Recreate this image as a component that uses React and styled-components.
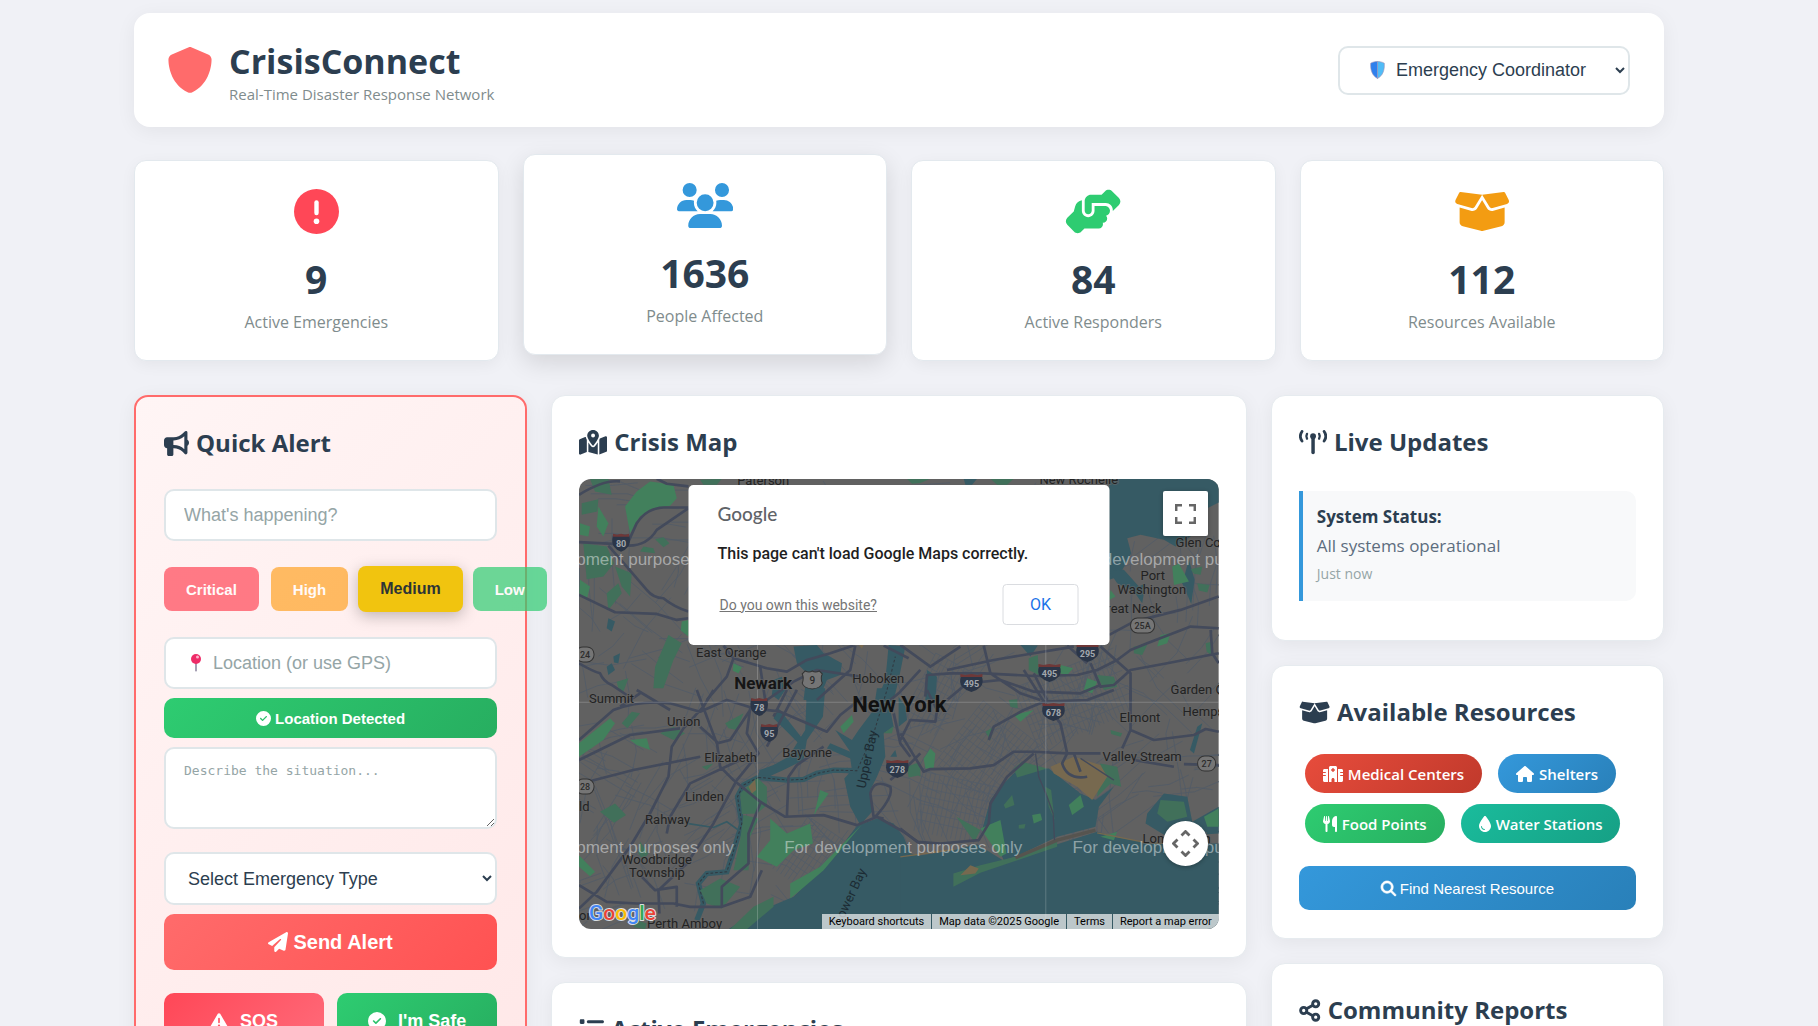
import React from "react";
import styled, { createGlobalStyle } from "styled-components";
import {
  FaShield,
  FaUsers,
  FaHandshakeAngle,
  FaBoxOpen,
  FaBullhorn,
  FaMapLocationDot,
  FaCircleCheck,
  FaPaperPlane,
  FaTriangleExclamation,
  FaHospital,
  FaHouse,
  FaUtensils,
  FaDroplet,
  FaMagnifyingGlass,
  FaList,
} from "react-icons/fa6";

const GlobalStyle = createGlobalStyle`
  *, *::before, *::after { box-sizing: border-box; }
  html { background: #f0f1f6; }
  body {
    margin: 0;
    height: 100vh;
    overflow: hidden;
    font-family: "Open Sans", "Noto Sans", sans-serif;
    color: #2c3e50;
  }
  h1, h2, p { margin: 0; }
  button, input, select { font-family: "Liberation Sans", Arial, sans-serif; }
  svg { flex: none; }
`;

const GlyphBox = styled.span`
  display: inline-flex;
  flex: none;
  width: ${(p) => p.$wide / 512}em;
  height: 1em;
  & > svg {
    width: 100%;
    height: 100%;
    ${(p) => (p.$heavy ? "stroke: currentColor; stroke-width: 24px; overflow: visible;" : "")}
  }
`;

// Icons are drawn one em high; `wide` is the width of the icon's 512-high view box.
const Glyph = ({ icon: Icon, wide = 512, heavy }) => (
  <GlyphBox $wide={wide} $heavy={heavy}>
    <Icon aria-hidden="true" />
  </GlyphBox>
);

const Page = styled.div`
  padding: 13px 154px 24px 134px;
`;

const Header = styled.header`
  display: flex;
  align-items: center;
  justify-content: space-between;
  padding: 23px 34px 23px 33px;
  border-radius: 16px;
  background: #fff;
  box-shadow: 0 4px 20px rgba(0, 0, 0, 0.06);
`;

const Brand = styled.div`
  display: flex;
  align-items: center;
  gap: 16px;
  & > ${GlyphBox} { font-size: 46px; color: #ff6b6b; }
`;

const BrandText = styled.div`
  padding-top: 2px;
`;

const BrandName = styled.h1`
  font-size: 34px;
  line-height: 46px;
  font-weight: 700;
`;

const Tagline = styled.p`
  font-size: 15px;
  line-height: 20px;
  color: #7f8c8d;
`;

const FieldBox = styled.div`
  position: relative;
  width: ${(p) => p.$width || "100%"};
  & > svg {
    position: absolute;
    left: ${(p) => p.$iconLeft || 26}px;
    top: 50%;
    transform: translateY(-50%);
    pointer-events: none;
  }
`;

const Select = styled.select`
  display: block;
  width: 100%;
  height: ${(p) => p.$height}px;
  padding: 0 ${(p) => (p.$iconSpace ? 0 : 18)}px 0 ${(p) => (p.$iconSpace ? 52 : 18)}px;
  border: 2px solid #dfe6e9;
  border-radius: 10px;
  background: #fff;
  color: #2c3e50;
  font-size: 18px;
`;

const Stats = styled.section`
  display: grid;
  grid-template-columns: repeat(4, 1fr);
  gap: 24px;
  margin: 33px 0 34px;
`;

const StatCard = styled.article`
  display: flex;
  flex-direction: column;
  align-items: center;
  padding: 28px;
  border: 1px solid #e3e9ee;
  border-radius: 12px;
  background: #fff;
  box-shadow: ${(p) => (p.$raised ? "0 8px 25px rgba(0, 0, 0, 0.12)" : "0 4px 15px rgba(0, 0, 0, 0.05)")};
  transform: ${(p) => (p.$raised ? "translateY(-6px)" : "none")};
  & > ${GlyphBox} { font-size: 45px; color: ${(p) => p.$color}; }
`;

const StatNumber = styled.div`
  margin: 20px 0 8px;
  font-size: 39px;
  line-height: 50px;
  font-weight: 700;
`;

const StatLabel = styled.div`
  font-size: 16px;
  line-height: 20px;
  color: #7f8c8d;
`;

const Dashboard = styled.main`
  display: grid;
  grid-template-columns: minmax(0, 13fr) minmax(0, 23fr) minmax(0, 13fr);
  gap: 24px;
  align-items: start;
`;

const Column = styled.div`
  display: flex;
  flex-direction: column;
  gap: 24px;
  min-width: 0;
`;

const Card = styled.section`
  padding: 27px 27px 28px;
  border: 1px solid #e6ebef;
  border-radius: 14px;
  background: #fff;
  box-shadow: 0 4px 20px rgba(0, 0, 0, 0.06);
`;

const AlertCard = styled(Card)`
  position: relative;
  padding: 27px 28px 28px;
  border: 2px solid #ff6b6b;
  background: linear-gradient(135deg, #fff5f5, #ffe8e8);
`;

const CardTitle = styled.h2`
  display: flex;
  align-items: center;
  gap: 7px;
  margin-bottom: ${(p) => p.$space}px;
  font-size: 24px;
  line-height: 38px;
  font-weight: 700;
  white-space: nowrap;
  & > ${GlyphBox} { font-size: 25px; }
`;

const TextInput = styled.input`
  display: block;
  width: 100%;
  height: 52px;
  padding: 0 18px 0 ${(p) => (p.$iconSpace ? 47 : 18)}px;
  border: 2px solid #dfe6e9;
  border-radius: 10px;
  background: #fff;
  font-size: 18px;
  &::placeholder { color: #95a5a6; opacity: 1; }
`;

const Levels = styled.div`
  display: flex;
  gap: 12px;
  margin: 26px 0;
`;

const levelColors = {
  critical: "#ff4757",
  high: "#ffa326",
  medium: "#f1c40f",
  low: "#2ecc71",
};

const LevelButton = styled.button`
  flex: none;
  height: ${(p) => (p.$active ? 46 : 44)}px;
  margin: ${(p) => (p.$active ? "-1px -2px" : "0")};
  padding: 0 22px;
  border: 0;
  border-radius: 8px;
  background: ${(p) => levelColors[p.$level]};
  color: ${(p) => (p.$active ? "#2d3436" : "#fff")};
  font-size: ${(p) => (p.$active ? 16 : 15)}px;
  font-weight: 700;
  opacity: ${(p) => (p.$active ? 1 : 0.7)};
  box-shadow: ${(p) => (p.$active ? "0 4px 15px rgba(0, 0, 0, 0.25)" : "none")};
`;

const gradients = {
  green: "linear-gradient(135deg, #2ecc71, #27ae60)",
  coral: "linear-gradient(135deg, #ff6b6b, #ff5252)",
  red: "linear-gradient(135deg, #ff4757, #ff6b7a)",
  blue: "linear-gradient(135deg, #3498db, #2980b9)",
  brick: "linear-gradient(135deg, #e74c3c, #c0392b)",
  teal: "linear-gradient(135deg, #1abc9c, #16a085)",
};

const ActionButton = styled.button`
  display: flex;
  align-items: center;
  justify-content: center;
  gap: ${(p) => p.$gap || 4}px;
  width: 100%;
  height: ${(p) => p.$height}px;
  padding: 0;
  border: 0;
  border-radius: 10px;
  background: ${(p) => gradients[p.$tone]};
  color: #fff;
  font-size: ${(p) => p.$size}px;
  font-weight: ${(p) => p.$weight || 700};
`;

const Stack = styled.div`
  display: flex;
  flex-direction: column;
  gap: 9px;
`;

const TextArea = styled.textarea`
  display: block;
  width: 100%;
  height: 82px;
  margin-bottom: 14px;
  padding: 13px 18px;
  border: 2px solid #dfe6e9;
  border-radius: 10px;
  background: #fff;
  font-family: "DejaVu Sans Mono", monospace;
  font-size: 13px;
  line-height: 18px;
  resize: vertical;
  &::placeholder { color: #95a5a6; opacity: 1; }
`;

const PanicRow = styled.div`
  display: grid;
  grid-template-columns: 1fr 1fr;
  gap: 13px;
  margin-top: 23px;
`;

const MapFrame = styled.div`
  position: relative;
  height: 450px;
  border-radius: 12px;
  overflow: hidden;
  font-family: Roboto, sans-serif;
`;

const MapCanvas = styled.svg`
  display: block;
  width: 100%;
  height: 100%;
  text { font-family: Roboto, sans-serif; }
`;

const Watermark = styled.g`
  text { font-family: "Liberation Sans", Arial, sans-serif; }
`;

const MapDialog = styled.div`
  position: absolute;
  top: 6px;
  left: 50%;
  display: flex;
  flex-direction: column;
  width: 421px;
  height: 160px;
  padding: 18px 31px 20px 29px;
  border-radius: 5px;
  background: #fff;
  color: #1f1f1f;
  transform: translateX(-50%);
`;

const DialogLogo = styled.div`
  font-family: Lato, sans-serif;
  font-size: 19px;
  line-height: 22px;
  font-weight: 500;
  color: #5f6368;
`;

const DialogText = styled.p`
  margin-top: 19px;
  font-size: 16px;
  line-height: 20px;
  font-weight: 500;
`;

const DialogActions = styled.div`
  display: flex;
  align-items: center;
  justify-content: space-between;
  margin-top: 20px;
  padding-left: 2px;
  a { color: #757575; font-size: 14px; text-decoration: underline; }
`;

const DialogButton = styled.button`
  width: 76px;
  height: 41px;
  border: 1px solid #dadce0;
  border-radius: 4px;
  background: #fff;
  color: #1a73e8;
  font-family: Roboto, sans-serif;
  font-size: 16px;
`;

const MapControl = styled.button`
  position: absolute;
  right: 11px;
  ${(p) => (p.$round ? "bottom: 63px;" : "top: 12px;")}
  display: grid;
  place-items: center;
  width: 45px;
  height: 45px;
  padding: 0;
  border: 0;
  border-radius: ${(p) => (p.$round ? "50%" : "2px")};
  background: #fff;
  box-shadow: 0 1px 4px rgba(0, 0, 0, 0.3);
`;

const MapFooter = styled.div`
  position: absolute;
  right: 0;
  bottom: 0;
  display: flex;
  gap: 1px;
  font-size: 11px;
  line-height: 15px;
  & > * {
    padding: 0 7px;
    border: 0;
    background: rgba(245, 245, 245, 0.7);
    color: #000;
    font: inherit;
    text-decoration: none;
  }
`;

const Update = styled.article`
  display: flex;
  flex-direction: column;
  gap: 4px;
  margin-bottom: 11px;
  padding: 13px 14px 15px;
  border-left: 4px solid #3498db;
  border-radius: 0 10px 10px 0;
  background: #f8f9fa;
  font-size: 17px;
  line-height: 25px;
  strong { font-weight: 700; }
  p { color: #5d6d7e; }
  time { font-size: 14px; line-height: 24px; color: #95a5a6; }
`;

const Pills = styled.div`
  display: flex;
  flex-wrap: wrap;
  gap: 11px 16px;
  margin: 0 0 23px 6px;
`;

const Pill = styled.span`
  display: flex;
  align-items: center;
  gap: 5px;
  height: 39px;
  padding: 0 18px;
  border-radius: 20px;
  background: ${(p) => gradients[p.$tone]};
  color: #fff;
  font-size: 15px;
  font-weight: 600;
  white-space: nowrap;
  & > ${GlyphBox} { font-size: 16px; }
`;

/* ---------- Small drawings ---------- */

const BlueShield = () => (
  <svg width="15" height="18" viewBox="0 0 15 18" aria-hidden="true">
    <path d="M7.5 0.5C5.500 0.500 2.500 1 0.700 2.200C0.300 9 2 14.500 7.500 17.500Z" fill="#2f80ed" stroke="#9a8fb5" strokeWidth="0.6" />
    <path d="M7.5 0.5C9.500 0.500 12.500 1 14.300 2.200C14.700 9 13 14.500 7.500 17.500Z" fill="#50bcf7" stroke="#9a8fb5" strokeWidth="0.600" />
  </svg>
);

const RoundPin = () => (
  <svg width="12" height="18" viewBox="0 0 12 18" aria-hidden="true">
    <path d="M5 9h2v7.500l-1 1.500l-1-1.500z" fill="#a6a0b4" />
    <circle cx="6" cy="5" r="5" fill="#ee2c68" />
    <circle cx="7.500" cy="3" r="1.500" fill="#ffb3cb" />
  </svg>
);

const AlertCircle = () => (
  <svg viewBox="0 0 45 45" fill="currentColor" aria-hidden="true">
    <circle cx="22.500" cy="22.500" r="22.500" />
    <rect x="20.300" y="11.300" width="4.400" height="15" rx="2.200" fill="#fff" />
    <circle cx="22.500" cy="32.300" r="2.800" fill="#fff" />
  </svg>
);

const Antenna = () => (
  <svg viewBox="0 0 29 26" fill="none" stroke="currentColor" strokeLinecap="round" aria-hidden="true">
    <path d="M3 1.500C0.900 4.500 0.900 8.500 3 11.500M26 1.500C28.100 4.500 28.100 8.500 26 11.500" strokeWidth="2.900" />
    <path d="M8.200 4Q6.800 6.500 8.200 9M20.800 4Q22.200 6.500 20.800 9" strokeWidth="2.400" />
    <path d="M14.500 7V23.500" strokeWidth="3.600" />
    <circle cx="14.500" cy="6.500" r="3" fill="currentColor" stroke="none" />
  </svg>
);

const ShareNodes = () => (
  <svg viewBox="0 0 22 26" fill="none" stroke="currentColor" strokeWidth="3" aria-hidden="true">
    <path d="M7 11.500L14 7.500M7 14.500L14 18.500" />
    <circle cx="4.500" cy="13" r="3.200" />
    <circle cx="17" cy="6" r="3.200" />
    <circle cx="17" cy="20" r="3.200" />
  </svg>
);

const FullscreenGlyph = () => (
  <svg width="21" height="20" viewBox="0 0 21 20" fill="none" stroke="#666" strokeWidth="2.500" aria-hidden="true">
    <path d="M1.200 7V1.200H7M14 1.200h5.800V7M19.800 13v5.800H14M7 18.800H1.200V13" />
  </svg>
);

const CameraGlyph = () => (
  <svg width="27" height="27" viewBox="0 0 27 27" fill="none" stroke="#666" strokeWidth="2.800" aria-hidden="true">
    <path d="M9.500 5.500l4-4l4 4M9.500 21.500l4 4l4-4M5.500 9.500l-4 4l4 4M21.500 9.500l4 4l-4 4" />
  </svg>
);

/* ---------- Map ---------- */

const palette = {
  land: "#616161",
  water: "#365a64",
  green: "#41705a",
  lightGreen: "#42805c",
  sand: "#77694f",
  road: "#434a5b",
  street: "#525c68",
};

// One entry per quadrant, each with its own origin on a 1917 x 1350 plane.
const quadrants = [
  {
    at: [-117, -297],
    water: [
      "760,800 830,795 850,820 905,850 900,885 860,900 835,960 790,960 800,880 770,850",
      "1045,795 1095,800 1075,900 1060,960 1010,960 1035,900 1040,850",
      "205,715 225,725 215,755 200,745",
      "200,860 215,850 225,870 205,885",
      "220,830 240,820 235,850 222,848",
      "700,900 725,890 735,930 715,960 695,945",
    ],
    green: [
      "290,335 330,305 400,315 410,355 390,378 340,385 300,410 270,460 255,380",
      "150,297 205,297 215,345 165,335",
      "125,370 175,358 172,395 125,405",
      "175,380 205,430 190,470 170,440",
      "130,490 200,500 222,550 190,590 140,598",
      "385,765 425,790 400,840 370,925 340,925 345,860",
      "425,725 445,720 445,770 422,752",
      "345,478 370,472 388,490 370,502",
      "200,640 235,610 245,640 205,690",
      "120,600 150,620 140,660 118,640",
      "225,560 275,580 270,650 245,620",
      "230,905 265,895 250,935 235,925",
      "580,850 605,862 595,880 578,872",
      "310,500 340,505 345,520 300,515",
      "480,300 545,297 530,315 490,315",
      "120,430 150,440 145,470 120,465",
    ],
    sand: ["955,795 970,795 965,806"],
    roads: [
      "M117 487L220 492L260 497L290 430Q320 385 370 383L445 383",
      "M260 497Q320 500 350 450L445 385",
      "M205 497L260 560L320 630Q340 655 370 655Q400 680 445 695",
      "M117 645L225 697L350 702L410 720L445 715",
      "M117 850Q160 875 180 880Q190 905 215 915L260 945",
      "M117 345Q190 300 240 305",
      "M350 297L380 312L445 320",
      "M500 960L560 890L580 835L680 865L740 875L800 840L870 820L940 797",
      "M580 835L550 797",
      "M660 860L675 960",
      "M680 960L760 905L830 870L960 890",
      "M1030 797L1105 835M1140 870L1075 940L1050 960",
      "M945 797L930 870L830 960",
    ],
  },
  {
    at: [963, -297],
    water: [
      "626,297 954,297 954,368 920,385 900,420 870,470 825,500 790,480 720,465 680,475 692,520 655,590 626,600",
      "626,575 670,570 715,620 735,610 725,670 700,635 650,610",
      "865,540 882,600 872,672 845,610",
      "75,960 80,870 110,890 105,960",
      "360,795 412,797 390,830",
      "190,297 230,297 215,315 195,315",
    ],
    green: [
      "815,560 835,552 865,605 820,615",
      "890,610 927,615 920,638 895,632",
      "385,835 412,825 415,885 385,870",
      "480,855 518,865 500,885 470,878",
      "590,885 640,890 650,920 610,930",
      "20,297 90,297 60,310 35,312",
      "780,765 810,760 800,790 770,800",
      "700,800 740,795 725,825 700,820",
      "870,568 905,560 900,585 880,582",
      "630,630 645,650 626,660",
      "270,297 340,297 320,315 290,315",
      "915,790 935,785 935,830 918,815",
      "560,895 590,905 575,940 550,930",
    ],
    sand: [],
    roads: [
      "M0 795L90 860L180 800",
      "M75 950L80 885L150 880L250 880L400 888L530 885L590 870L650 840L690 810L740 790L870 740L954 745",
      "M140 870L280 840L400 820L520 800",
      "M570 850L600 920L640 915L690 870L800 850L954 820",
      "M600 800L690 880L690 960",
      "M400 880L440 960",
      "M930 750L935 820L954 850",
      "M626 765L700 725L840 690L954 650",
      "M250 797L270 880L360 940L420 960",
      "M140 960L200 910L300 900L400 935L540 940L600 915",
      "M500 797L560 850",
    ],
  },
  {
    at: [-117, 633],
    water: [
      "800,-5 855,-5 848,80 800,150 790,210 730,240 680,262 652,272 658,240 700,225 745,200 795,120",
      "715,55 790,150 780,165 700,85",
      "1010,-5 1065,-5 1050,60 1060,110 1030,130 1035,200 1010,260 990,300 1000,360 960,405 930,350 912,265 935,240 930,205 860,175 870,160 930,185 885,120 935,150 955,120 1000,60",
      "950,407 1010,385 1060,400 1090,440 1110,490 1145,500 1145,720 560,720 640,670 760,620 880,500",
      "1050,200 1065,180 1070,200",
    ],
    green: [
      "117,160 210,85 225,100 190,150 117,200",
      "245,100 275,65 300,70 262,115",
      "180,365 225,340 258,375 222,398",
      "270,150 320,145 330,180 290,165",
      "360,130 400,110 435,130 400,150",
      "300,455 325,490 310,510 295,490",
      "117,495 165,545 150,558 117,530",
      "600,310 650,262 680,290 680,345 650,370 605,372",
      "610,375 655,385 630,440 625,540 580,540 600,450",
      "690,385 740,430 810,400 818,460 760,480 710,530 650,500 690,450",
      "480,600 540,565 600,590 545,655 500,640",
      "570,717 640,650 700,620 700,650 620,717",
      "965,403 850,540 780,600 750,625 750,580 840,530",
      "555,100 610,70 590,120 565,115",
      "1100,230 1140,215 1140,260",
      "900,110 935,75 940,95 910,130",
      "1030,130 1060,108 1055,130",
      "485,230 520,220 500,240",
      "820,380 840,300 865,310 830,360",
      "280,710 290,690 320,700 315,717",
    ],
    sand: ["625,290 645,268 648,300 635,310"],
    roads: [
      "M117 150L220 60Q300 30 390 40L480 65L560 30L640 55L720 65L860 125L900 75L970 20",
      "M117 210L270 135L420 115",
      "M117 290L155 272L280 240L480 200",
      "M520 0L490 50L430 115L395 170L385 260L330 370L270 470L170 605L117 655",
      "M630 55L620 130L655 190L590 270L520 400L440 520L355 600L358 670",
      "M480 110L530 155L540 230L580 270L660 335L735 380L850 375L950 405L1010 380L1090 425L1140 460",
      "M470 0L530 160L570 150L650 30",
      "M600 210L450 280L390 380L380 430",
      "M740 380L745 260L770 225L850 170",
      "M117 585L200 635L290 640L400 640L450 650L545 650L630 620L665 540",
      "M660 340L625 430L625 520L545 590L545 650",
      "M1000 380L990 310Q1000 265 1050 290Q1060 320 1005 380L1030 385",
      "M1050 270L1110 220L1140 190M1060 70L1080 160L1110 200",
      "M300 555L345 600L410 590L410 650",
      "M240 50L300 10M290 0L390 60M740 0L700 80M770 0L680 170",
    ],
  },
  {
    at: [963, 633],
    water: [
      "300,290 350,240 445,235 540,310 585,330 640,290 595,350 585,410 470,440 345,500 310,510 285,455 245,420 270,330",
      "0,505 160,480 230,462 310,512 590,425 640,440 740,458 954,460 954,720 0,720",
      "740,370 790,310 860,320 875,395 954,350 954,430 800,440 735,400",
      "-5,20 15,50 20,90 -5,110",
      "890,110 905,100 880,190 868,180",
    ],
    green: [
      "240,415 300,390 318,490 300,500",
      "168,380 240,420 222,455",
      "340,235 365,215 440,235 350,262",
      "70,205 90,175 105,190 100,235 75,235",
      "600,220 650,230 662,290 630,280 590,320",
      "310,345 335,315 342,345 315,355",
      "505,345 540,315 550,350 515,375",
      "435,290 452,300 462,390 445,350",
      "355,405 375,402 372,415 355,415",
      "395,375 420,370 425,390 400,400",
      "159,590 159,550 240,525 345,500 470,455 470,470 240,548",
      "780,330 850,335 860,380 800,395 770,370",
      "910,380 954,355 954,410 920,410",
      "20,230 55,225 60,255 25,262",
      "255,125 280,110 270,150",
      "340,75 400,60 360,95",
      "630,120 665,130 660,140 632,132",
      "325,30 350,28 352,55 330,50",
      "600,440 650,425 640,450",
    ],
    sand: ["450,230 520,200 600,225 620,260 575,330 530,290 460,250", "180,555 210,525 235,535 225,550"],
    roads: [
      "M0 130L70 245L90 237L210 235L280 225L340 185L400 185L500 190L600 190",
      "M820 230L700 210M850 222L954 225",
      "M400 190L320 260L270 340L265 400L235 450L120 460L50 455L0 415",
      "M370 -60L430 35L480 100L500 190L485 220Q500 270 560 260M520 190L540 245",
      "M265 150L280 110L370 60L430 35L560 30L640 0",
      "M690 0L690 120L760 150L880 135L915 117L954 125",
      "M690 120L665 175",
      "M0 150L30 90L105 95L110 60L80 0",
    ],
  },
];

// Minor streets: short runs laid over tilted blocks, with a fixed seed so each draw is alike.
const streets = (() => {
  let seed = 17;
  const rnd = () => {
    seed = (seed * 16807) % 2147483647;
    return seed / 2147483647;
  };
  let d = "";
  for (let i = 0; i < 480; i += 1) {
    const x = rnd() * 1917;
    const y = rnd() * 1350;
    const tilt = Math.floor(x / 320) * 0.5 + Math.floor(y / 270) * 0.7 + (rnd() > 0.5 ? Math.PI / 2 : 0);
    const bend = tilt + (rnd() - 0.5) * 0.8;
    const len = 40 + rnd() * 90;
    const mx = x + Math.cos(tilt) * len;
    const my = y + Math.sin(tilt) * len;
    const ex = mx + Math.cos(bend) * len;
    const ey = my + Math.sin(bend) * len;
    d += `M${x.toFixed(0)} ${y.toFixed(0)}L${mx.toFixed(0)} ${my.toFixed(0)}L${ex.toFixed(0)} ${ey.toFixed(0)}`;
  }
  return d;
})();

// Dense city blocks: regular grids in the boroughs.
const cityBlocks = [
  { x: 1010, y: 540, w: 130, h: 220, tilt: 28 },
  { x: 1110, y: 720, w: 260, h: 240, tilt: 38 },
  { x: 1020, y: 900, w: 220, h: 180, tilt: 12 },
  { x: 1330, y: 560, w: 320, h: 200, tilt: -22 },
  { x: 620, y: 1040, w: 160, h: 190, tilt: 34 },
];

const labels = [
  ["Paterson", 158, 6], ["East Orange", 117, 178], ["Hoboken", 273, 204],
  ["New Rochelle", 460, 5], ["Glen Cove", 596, 68], ["Port", 561, 101],
  ["Washington", 538, 115], ["Great Neck", 518, 134], ["Garden City", 591, 215],
  ["Summit", 10, 224], ["Union", 88, 247], ["Elizabeth", 125, 283],
  ["Bayonne", 203, 278], ["Linden", 106, 322], ["Rahway", 66, 345],
  ["Woodbridge", 43, 385], ["Township", 50, 398], ["Perth Amboy", 68, 449],
  ["ld", 0, 332], ["on", 0, 441], ["Elmont", 540, 243],
  ["Hempstead", 603, 237], ["Valley Stream", 523, 282], ["Long Beach", 563, 364],
];

const interstates = [
  ["80", 42, 64], ["78", 180, 228], ["95", 190, 254], ["278", 318, 290],
  ["495", 392, 204], ["495", 470, 194], ["295", 508, 174], ["678", 474, 233],
];

const routes = [["24", 6, 176], ["28", 6, 308], ["25A", 563, 147], ["27", 627, 285]];

const CrisisMapDrawing = () => (
  <MapCanvas viewBox="0 0 639 450" preserveAspectRatio="xMidYMid slice" role="img" aria-label="Map of New York">
    <rect width="639" height="450" fill={palette.land} />
    <g transform="scale(0.33333)">
      <path d={streets} fill="none" stroke={palette.street} strokeWidth="2.5" />
      {cityBlocks.map((b) => (
        <g key={`${b.x}-${b.y}`} transform={`rotate(${b.tilt} ${b.x + b.w / 2} ${b.y + b.h / 2})`} stroke={palette.street} strokeWidth="2">
          {Array.from({ length: Math.floor(b.w / 14) }, (_, i) => (
            <path key={`v${i}`} d={`M${b.x + i * 14} ${b.y}v${b.h}`} />
          ))}
          {Array.from({ length: Math.floor(b.h / 24) }, (_, i) => (
            <path key={`h${i}`} d={`M${b.x} ${b.y + i * 24}h${b.w}`} />
          ))}
        </g>
      ))}
      {quadrants.map((q) => (
        <g key={q.at.join()} transform={`translate(${q.at[0]} ${q.at[1]})`}>
          {q.water.map((pts) => <polygon key={pts} points={pts} fill={palette.water} />)}
        </g>
      ))}
      <g transform="translate(-117 633)" fill="none">
        <path d="M655 262L610 285L592 320L605 400L575 500L560 545L500 550L475 580L490 640L470 690" stroke={palette.water} strokeWidth="16" />
        <path d="M440 400L520 412L560 395L595 420" stroke={palette.water} strokeWidth="5" />
        <path d="M655 262L740 270L790 268L830 250L880 240L950 242" stroke={palette.water} strokeWidth="16" />
      </g>
      {quadrants.map((q) => (
        <g key={q.at.join()} transform={`translate(${q.at[0]} ${q.at[1]})`}>
          {q.green.map((pts, i) => <polygon key={pts} points={pts} fill={i % 3 ? palette.green : palette.lightGreen} />)}
          {q.sand.map((pts) => <polygon key={pts} points={pts} fill={palette.sand} />)}
        </g>
      ))}
      <g transform="translate(-117 633)" fill="none" stroke="#31383f" strokeWidth="3" strokeDasharray="8 6">
        <path d="M655 262L610 285L592 320L605 400L575 500L560 545L500 550L475 580L490 640" />
        <path d="M655 262L740 270L790 268L830 250L880 240L950 242L1000 130L1040 0L1065 -100" />
      </g>
      <g transform="translate(963 633)" fill="none" stroke="#56544f" strokeWidth="10">
        <path d="M345 503L470 450L585 420" />
        <path d="M405 190L415 260L440 320L458 370L462 450M540 205L640 270" stroke={palette.road} strokeWidth="4" />
        <path d="M0 500L160 478M590 428L740 458L860 462" stroke={palette.sand} strokeWidth="4" />
      </g>
      {quadrants.map((q) => (
        <g key={q.at.join()} transform={`translate(${q.at[0]} ${q.at[1]})`}>
          <path d={q.roads.join("")} fill="none" stroke={palette.road} strokeWidth="8" strokeLinejoin="round" />
        </g>
      ))}
      <path d="M535 0V1350M1399 0V1350M0 670H1917" stroke="#fff" strokeOpacity="0.2" strokeWidth="3" />
    </g>
    <g fontSize="13" fill="#222" stroke="#666" strokeWidth="2" strokeOpacity="0.6" paintOrder="stroke">
      {labels.map(([name, x, y]) => <text key={name} x={x} y={y}>{name}</text>)}
      <text x="155" y="210" fontSize="17" fontWeight="700" fill="#161616">Newark</text>
      <text x="273" y="233" fontSize="22" fontWeight="700" fill="#111">New York</text>
    </g>
    <g fontSize="13" fill="#1c2b33">
      <text transform="translate(286 310) rotate(-78)">Upper Bay</text>
      <text transform="translate(262 446) rotate(-65)">Lower Bay</text>
    </g>
    {interstates.map(([n, x, y]) => (
      <g key={`${n}-${x}`} transform={`translate(${x} ${y})`}>
        <path d={n.length > 2 ? "M-10 -8H10Q13 0 9 4Q5 8 0 9Q-5 8 -9 4Q-13 0 -10 -8Z" : "M-8 -8H8Q10 0 7 4Q4 8 0 9Q-4 8 -7 4Q-10 0 -8 -8Z"} fill="#2b3648" />
        <path d={n.length > 2 ? "M-11 -6V-9L-6 -8L0 -9L6 -8L11 -9V-6Z" : "M-8 -6V-9L-4 -8L0 -9L4 -8L8 -9V-6Z"} fill="#6e3838" />
        <text y="4" fontSize="9" fontWeight="700" fill="#a3a8ae" textAnchor="middle">{n}</text>
      </g>
    ))}
    {routes.map(([n, x, y]) => (
      <g key={n} transform={`translate(${x} ${y})`}>
        <rect x={n.length > 2 ? -12 : -9} y="-8" width={n.length > 2 ? 24 : 18} height="15" rx="7" fill="#757575" stroke="#333" />
        <text y="3" fontSize="9" fontWeight="500" fill="#2c2c2c" textAnchor="middle">{n}</text>
      </g>
    ))}
    <g transform="translate(233 201)">
      <path d="M-7 -9Q-3 -7 0 -9Q3 -7 7 -9L10 -6Q8 -2 10 3Q9 8 0 9Q-9 8 -10 3Q-8 -2 -10 -6Z" fill="#757575" stroke="#333" />
      <text y="4" fontSize="10" fontWeight="500" fill="#2c2c2c" textAnchor="middle">9</text>
    </g>
    <Watermark fontSize="17" fill="#fff" fillOpacity="0.45">
      {[86, 374].map((y) => [-83, 205, 493].map((x) => (
        <text key={`${x}-${y}`} x={x} y={y}>For development purposes only</text>
      )))}
    </Watermark>
    <text x="10" y="441" fontSize="21" fontWeight="500" stroke="#d8dde0" strokeWidth="2" strokeLinejoin="round" paintOrder="stroke">
      <tspan fill="#4285f4">G</tspan>
      <tspan fill="#ea4335">o</tspan>
      <tspan fill="#fbbc05">o</tspan>
      <tspan fill="#4285f4">g</tspan>
      <tspan fill="#34a853">l</tspan>
      <tspan fill="#ea4335">e</tspan>
    </text>
  </MapCanvas>
);

/* ---------- Page ---------- */

const stats = [
  { icon: AlertCircle, wide: 512, color: "#ff4757", value: "9", label: "Active Emergencies" },
  { icon: FaUsers, wide: 640, color: "#3498db", value: "1636", label: "People Affected", raised: true },
  { icon: FaHandshakeAngle, wide: 640, color: "#2ecc71", value: "84", label: "Active Responders" },
  { icon: FaBoxOpen, wide: 640, color: "#f39c12", value: "112", label: "Resources Available" },
];

const resources = [
  { icon: FaHospital, wide: 640, tone: "brick", label: "Medical Centers" },
  { icon: FaHouse, wide: 576, tone: "blue", label: "Shelters" },
  { icon: FaUtensils, wide: 448, tone: "green", label: "Food Points" },
  { icon: FaDroplet, wide: 384, tone: "teal", label: "Water Stations" },
];

export default function App() {
  return (
    <>
      <GlobalStyle />
      <Page>
        <Header>
          <Brand>
            <Glyph icon={FaShield} />
            <BrandText>
              <BrandName>CrisisConnect</BrandName>
              <Tagline>Real-Time Disaster Response Network</Tagline>
            </BrandText>
          </Brand>
          <FieldBox $width="292px" $iconLeft={32}>
            <Select $height={49} $iconSpace aria-label="Role" defaultValue="coordinator">
              <option value="coordinator">Emergency Coordinator</option>
            </Select>
            <BlueShield />
          </FieldBox>
        </Header>

        <Stats>
          {stats.map(({ icon, wide, color, value, label, raised }) => (
            <StatCard key={label} $color={color} $raised={raised}>
              <Glyph icon={icon} wide={wide} />
              <StatNumber>{value}</StatNumber>
              <StatLabel>{label}</StatLabel>
            </StatCard>
          ))}
        </Stats>

        <Dashboard>
          <AlertCard>
            <CardTitle $space={27}><Glyph icon={FaBullhorn} />Quick Alert</CardTitle>
            <TextInput aria-label="What's happening?" placeholder="What's happening?" />
            <Levels>
              <LevelButton $level="critical">Critical</LevelButton>
              <LevelButton $level="high">High</LevelButton>
              <LevelButton $level="medium" $active>Medium</LevelButton>
              <LevelButton $level="low">Low</LevelButton>
            </Levels>
            <Stack>
              <FieldBox>
                <TextInput $iconSpace aria-label="Location" placeholder="Location (or use GPS)" />
                <RoundPin />
              </FieldBox>
              <ActionButton $tone="green" $height={40} $size={15}><Glyph icon={FaCircleCheck} />Location Detected</ActionButton>
              <TextArea aria-label="Description" placeholder="Describe the situation..." />
              <Select $height={53} aria-label="Emergency type" defaultValue="">
                <option value="">Select Emergency Type</option>
              </Select>
              <ActionButton $tone="coral" $height={56} $size={20} $gap={5}><Glyph icon={FaPaperPlane} />Send Alert</ActionButton>
            </Stack>
            <PanicRow>
              <ActionButton $tone="red" $height={56} $size={18} $gap={12}><Glyph icon={FaTriangleExclamation} />SOS</ActionButton>
              <ActionButton $tone="green" $height={56} $size={18} $gap={12}><Glyph icon={FaCircleCheck} />I'm Safe</ActionButton>
            </PanicRow>
          </AlertCard>

          <Column>
            <Card>
              <CardTitle $space={18}><Glyph icon={FaMapLocationDot} wide={576} />Crisis Map</CardTitle>
              <MapFrame>
                <CrisisMapDrawing />
                <MapControl aria-label="Toggle fullscreen view"><FullscreenGlyph /></MapControl>
                <MapControl $round aria-label="Map camera controls"><CameraGlyph /></MapControl>
                <MapFooter>
                  <button type="button">Keyboard shortcuts</button>
                  <span>Map data ©2025 Google</span>
                  <a href="#terms">Terms</a>
                  <a href="#report">Report a map error</a>
                </MapFooter>
                <MapDialog>
                  <DialogLogo>Google</DialogLogo>
                  <DialogText>This page can't load Google Maps correctly.</DialogText>
                  <DialogActions>
                    <a href="#owner">Do you own this website?</a>
                    <DialogButton>OK</DialogButton>
                  </DialogActions>
                </MapDialog>
              </MapFrame>
            </Card>
            <Card>
              <CardTitle $space={18}><Glyph icon={FaList} />Active Emergencies</CardTitle>
            </Card>
          </Column>

          <Column>
            <Card>
              <CardTitle $space={30}><Glyph icon={Antenna} wide={576} />Live Updates</CardTitle>
              <Update>
                <strong>System Status:</strong>
                <p>All systems operational</p>
                <time>Just now</time>
              </Update>
            </Card>
            <Card>
              <CardTitle $space={23}><Glyph icon={FaBoxOpen} wide={640} />Available Resources</CardTitle>
              <Pills>
                {resources.map(({ icon, wide, tone, label }) => (
                  <Pill key={label} $tone={tone}><Glyph icon={icon} wide={wide} />{label}</Pill>
                ))}
              </Pills>
              <ActionButton $tone="blue" $height={44} $size={15} $weight={400}><Glyph icon={FaMagnifyingGlass} heavy />Find Nearest Resource</ActionButton>
            </Card>
            <Card>
              <CardTitle $space={18}><Glyph icon={ShareNodes} wide={448} />Community Reports</CardTitle>
            </Card>
          </Column>
        </Dashboard>
      </Page>
    </>
  );
}
